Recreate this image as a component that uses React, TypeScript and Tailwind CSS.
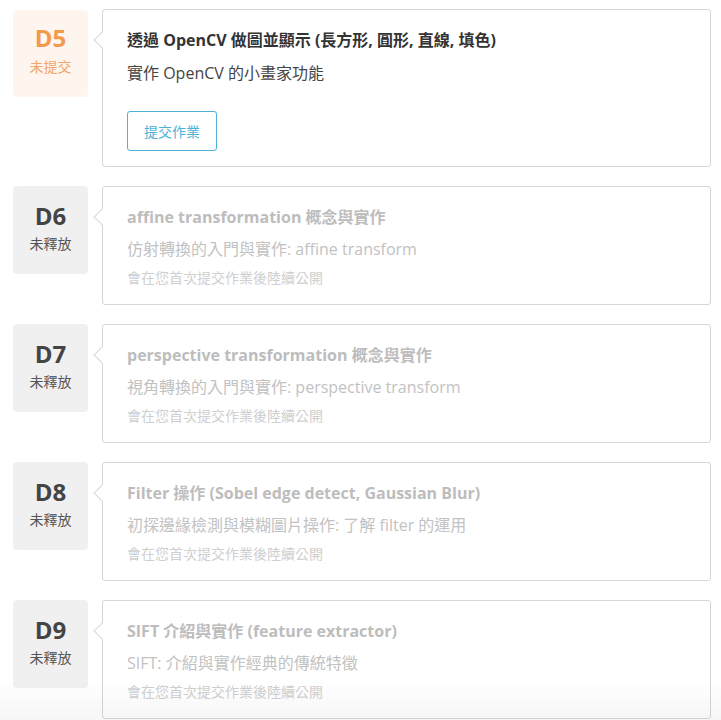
import React from 'react';

const font = { fontFamily: '"Open Sans", "Noto Sans CJK TC", sans-serif' };

type Day = {
  day: string;
  title: string;
  desc: string;
};

const locked: Day[] = [
  { day: 'D6', title: 'affine transformation 概念與實作', desc: '仿射轉換的入門與實作: affine transform' },
  { day: 'D7', title: 'perspective transformation 概念與實作', desc: '視角轉換的入門與實作: perspective transform' },
  { day: 'D8', title: 'Filter 操作 (Sobel edge detect, Gaussian Blur)', desc: '初探邊緣檢測與模糊圖片操作: 了解 filter 的運用' },
  { day: 'D9', title: 'SIFT 介紹與實作 (feature extractor)', desc: 'SIFT: 介紹與實作經典的傳統特徵' },
];

const Arrow = () => (
  <div className="absolute left-[-7px] top-[24px] w-[12px] h-[12px] rotate-45 bg-white border-l border-b border-[#d6d6d6]" />
);

const App = () => {
  return (
    <div className="relative w-[721px] h-[720px] overflow-hidden bg-white" style={font}>
      <div className="flex flex-col gap-[19px] pt-[9px] pl-[13px] pr-[10px]">
        <div className="flex">
          <div className="w-[75px] h-[87px] mt-[1px] rounded bg-[#fff5ef] flex flex-col items-center pt-[12px]">
            <span className="text-[24px] font-bold leading-[32px] text-[#f39a4b]">D5</span>
            <span className="text-[14px] leading-[20px] mt-[3px] text-[#f3a569]">未提交</span>
          </div>
          <div className="relative ml-[14px] flex-1 h-[158px] border border-[#d6d6d6] rounded-[3px] bg-white pl-[24px] pt-[19px]">
            <Arrow />
            <div className="text-[16px] font-bold leading-[22px] text-[#333]">透過 OpenCV 做圖並顯示 (長方形, 圓形, 直線, 填色)</div>
            <div className="text-[16px] leading-[22px] mt-[11px] text-[#444]">實作 OpenCV 的小畫家功能</div>
            <button className="mt-[27px] w-[90px] h-[40px] rounded-[3px] border border-[#4db3d6] text-[14px] text-[#4db3d6]">提交作業</button>
          </div>
        </div>
        {locked.map((d) => (
          <div key={d.day} className="flex">
            <div className="w-[75px] h-[88px] rounded bg-[#f0f0f0] flex flex-col items-center pt-[14px]">
              <span className="text-[24px] font-bold leading-[32px] text-[#444]">{d.day}</span>
              <span className="text-[14px] leading-[20px] mt-[2px] text-[#555]">未釋放</span>
            </div>
            <div className="relative ml-[14px] flex-1 h-[119px] border border-[#d6d6d6] rounded-[3px] bg-white pl-[24px] pt-[19px]">
              <Arrow />
              <div className="text-[16px] font-bold leading-[22px] text-[#bdbdbd]">{d.title}</div>
              <div className="text-[16px] leading-[22px] mt-[10px] text-[#c2c2c2]">{d.desc}</div>
              <div className="text-[14px] leading-[18px] mt-[9px] text-[#cfcfcf]">會在您首次提交作業後陸續公開</div>
            </div>
          </div>
        ))}
      </div>
      <div className="absolute left-0 right-0 bottom-0 h-[40px] bg-gradient-to-b from-transparent to-[#000]/[0.035]" />
    </div>
  );
};

export default App;
